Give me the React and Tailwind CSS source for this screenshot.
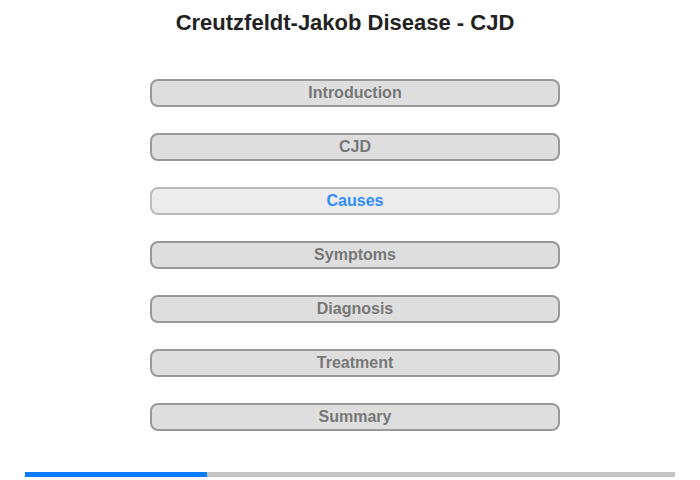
import React from "react";

const sections = ["Introduction", "CJD", "Causes", "Symptoms", "Diagnosis", "Treatment", "Summary"];

export default function App() {
  const active = 2;
  return (
    <div className="w-[700px] h-[480px] bg-white flex flex-col" style={{ fontFamily: '"Liberation Sans", Arial, sans-serif' }}>
      <h1 className="text-[22px] font-bold text-[#222] text-center pt-[9px] pr-[10px] leading-[27px]">
        Creutzfeldt-Jakob Disease - CJD
      </h1>
      <div className="flex flex-col items-center gap-[26px] mt-[43px] pl-[10px]">
        {sections.map((s, i) => (
          <div
            key={s}
            className={
              i === active
                ? "w-[410px] h-[28px] rounded-[8px] border-2 border-[#bbb] bg-[#ececec] text-[#2f8cff] text-[16px] font-bold flex items-center justify-center"
                : "w-[410px] h-[28px] rounded-[8px] border-2 border-[#999] bg-[#dedede] text-[#777] text-[16px] font-bold flex items-center justify-center"
            }
          >
            {s}
          </div>
        ))}
      </div>
      <div className="mt-[41px] mx-[25px] h-[5px] bg-[#c4c4c4] flex">
        <div className="w-[182px] h-full bg-[#0a7cff]" />
      </div>
    </div>
  );
}
